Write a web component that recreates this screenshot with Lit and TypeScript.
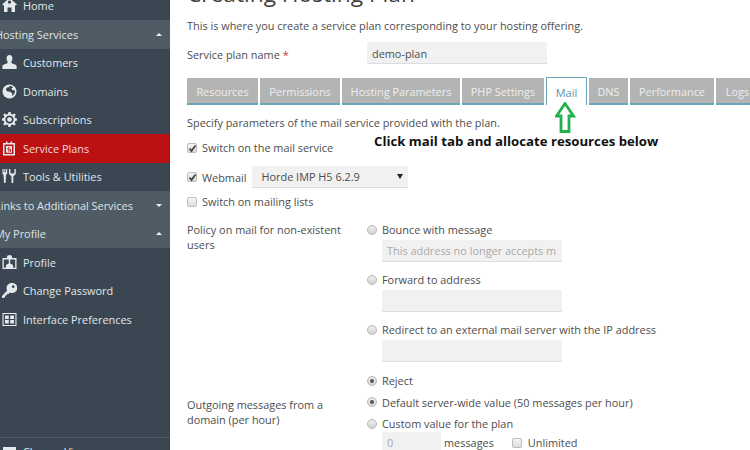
import { LitElement, html, css, svg } from "lit";
import { customElement } from "lit/decorators.js";

const icons: Record<string, unknown> = {
  home: svg`<path d="M7.5 0 L15 6.5 L13.5 7.5 L13 7 V14 H9.5 V9.5 H5.5 V14 H2 V7 L1.5 7.5 L0 6.5 Z M7.5 2.5 a1.6 1.6 0 1 0 .01 0 Z" fill-rule="evenodd"/>`,
  user: svg`<path d="M7.5 0 C9.8 0 10.6 1.8 10.4 3.8 C10.3 5.6 9.4 6.6 9.2 7.6 C9.2 8.8 14.4 9.4 14.6 11 V14 H.4 V11 C.7 9.4 5.8 8.8 5.8 7.6 C5.6 6.6 4.7 5.6 4.6 3.8 C4.4 1.8 5.2 0 7.5 0 Z"/>`,
  globe: svg`<path fill-rule="evenodd" d="M7.5 .5 a7 7 0 1 0 .01 0 Z M7.5 2 C8.6 2 10 2.4 11.2 3.4 L9.2 4.6 L10.4 6 L13 6.6 C13.2 8.6 12.2 10.8 10.2 11.9 L10.2 9.6 L8.2 7.8 L5.4 7.6 L3.8 5.8 L4.8 3.4 L6.4 3.6 Z"/>`,
  gear: svg`<path fill-rule="evenodd" d="M6.4 0 H8.6 L9 2 L10.6 2.6 L12.4 1.4 L13.8 2.8 L12.6 4.6 L13.2 6 L15 6.4 V8.6 L13.2 9 L12.6 10.4 L13.8 12.2 L12.4 13.6 L10.6 12.4 L9 13 L8.6 15 H6.4 L6 13 L4.4 12.4 L2.6 13.6 L1.2 12.2 L2.4 10.4 L1.8 9 L0 8.6 V6.4 L1.8 6 L2.4 4.6 L1.2 2.8 L2.6 1.4 L4.4 2.6 L6 2 Z M7.5 3.4 a4.1 4.1 0 1 0 .01 0 Z M7.5 5.2 a2.3 2.3 0 1 1 -.01 0 Z"/>`,
  plan: svg`<path fill-rule="evenodd" d="M1 2 H4 V.5 H5.5 V2 H8.5 V.5 H10 V2 H13 V14.5 H1 Z M2.5 3.6 V13 H11.5 V3.6 Z M4 5 H10 V11.8 H4 Z M6.4 6 V7.4 H5 V8.2 H6.4 V10.8 H7.4 V6 Z M8 8 V10.8 H9 V8 Z"/>`,
  tools: svg`<path d="M.4 0 H1.5 V3.2 H2.3 V0 H3.3 V3.2 H4.1 V0 H5.2 V4.4 L4 6 L3.6 14 H2 L1.6 6 L.4 4.4 Z M7 0 H8.4 V3.2 C8.4 4.2 9.2 4.6 10.4 4.6 C11.6 4.6 12.4 4.2 12.4 3.2 V0 H13.8 V4 C13.8 5.6 12.4 6.6 11.4 7 L11.2 14 H9.6 L9.4 7 C8.4 6.6 7 5.6 7 4 Z"/>`,
  profile: svg`<path fill-rule="evenodd" d="M.5 3 H5 V1.6 A2.5 1.6 0 0 1 10 1.6 V3 H14.5 V14 H.5 Z M1.8 4.4 V12.8 H3.8 L4 10 L6.8 8.6 V4.4 Z M8.2 4.4 V8.6 L11 10 L11.2 12.8 H13.2 V4.4 Z"/>`,
  key: svg`<path fill-rule="evenodd" d="M10 0 A5 5 0 1 1 8 9.4 L6.4 11 H4.8 V12.6 H3.2 V14 L1.6 15 H0 V13 L5.2 7.4 A5 5 0 0 1 10 0 Z M11.2 2.2 a1.4 1.4 0 1 0 .01 0 Z"/>`,
  grid: svg`<path fill-rule="evenodd" d="M.5 1 H14.5 V14 H.5 Z M1.6 2.1 V12.9 H13.4 V2.1 Z M3 3.4 H6.8 V6.9 H3 Z M8.2 3.4 H12 V6.9 H8.2 Z M3 8.1 H6.8 V11.6 H3 Z M8.2 8.1 H12 V11.6 H8.2 Z"/>`,
};

type Row =
  | { kind: "item"; label: string; icon: string; active?: boolean }
  | { kind: "group"; label: string; open: boolean };

const rows: Row[] = [
  { kind: "item", label: "Home", icon: "home" },
  { kind: "group", label: "Hosting Services", open: true },
  { kind: "item", label: "Customers", icon: "user" },
  { kind: "item", label: "Domains", icon: "globe" },
  { kind: "item", label: "Subscriptions", icon: "gear" },
  { kind: "item", label: "Service Plans", icon: "plan", active: true },
  { kind: "item", label: "Tools & Utilities", icon: "tools" },
  { kind: "group", label: "Links to Additional Services", open: false },
  { kind: "group", label: "My Profile", open: true },
  { kind: "item", label: "Profile", icon: "profile" },
  { kind: "item", label: "Change Password", icon: "key" },
  { kind: "item", label: "Interface Preferences", icon: "grid" },
];

const tabs: [string, number][] = [
  ["Resources", 71], ["Permissions", 80], ["Hosting Parameters", 118], ["PHP Settings", 82],
  ["Mail", 41], ["DNS", 39], ["Performance", 84], ["Logs", 43],
];

@customElement("app-root")
export class AppRoot extends LitElement {
  static styles = css`
    :host { display: block; width: 750px; height: 450px; overflow: hidden; background: #fff; font-family: "Open Sans", sans-serif; font-size: 10.9px; color: #4d4d4d; }
    .page { display: flex; height: 450px; overflow: hidden; position: relative; }
    .side { flex: 0 0 170px; width: 170px; height: 450px; background: #3a4651; overflow: hidden; display: flex; flex-direction: column; color: #e2e8ec; }
    .rows { margin-top: -8.5px; display: flex; flex-direction: column; flex: 1; }
    .row { height: 28.5px; flex: none; display: flex; align-items: center; gap: 6px; padding-left: 2px; }
    .row svg { width: 15px; height: 15px; fill: #e6e9eb; flex: none; }
    .row.active { background: #bc1113; color: #f3dcdc; }
    .row.group { background: #505c65; padding: 0 8px 0 0; margin-left: -5px; justify-content: space-between; color: #dfe4e7; }
    .caret { width: 0; height: 0; border-left: 3.5px solid transparent; border-right: 3.5px solid transparent; }
    .caret.up { border-bottom: 3.5px solid #f2f2f2; }
    .caret.down { border-top: 3.5px solid #f2f2f2; }
    .foot { flex: none; height: 13px; box-sizing: border-box; border-top: 1px solid #4f5a63; display: flex; align-items: flex-start; gap: 7px; padding: 9px 0 0 3px; }
    .foot i { display: block; flex: none; width: 13px; height: 12px; background: #e6e9eb; }
    .foot span { line-height: 14px; margin-top: -2px; white-space: nowrap; }
    .main { flex: 1; min-width: 0; padding-left: 17px; overflow: hidden; display: flex; flex-direction: column; align-items: flex-start; }
    h1 { margin: -21px 0 0; font-weight: 400; font-size: 22.7px; line-height: 30px; color: #3f3f3f; white-space: nowrap; }
    .desc { margin: 8px 0 0; line-height: 18px; height: 18px; white-space: nowrap; }
    .name { display: flex; align-items: center; height: 22px; margin-top: 8px; }
    .lbl { width: 180px; flex: none; padding-top: 2px; }
    .req { color: #c0392b; }
    .field { height: 22px; background: #f1f1f1; border-bottom: 1px solid #d9dde0; box-sizing: border-box; padding-left: 5px; line-height: 23px; width: 180px; }
    .tabs { display: flex; gap: 2px; margin-top: 14px; height: 27px; width: 590px; flex: none; }
    .tab { height: 27px; box-sizing: border-box; background: #b4b4b4; color: #eeeeee; border-bottom: 2px solid #6aa5be; line-height: 27px; text-align: center; flex: none; }
    .tab.on { background: #fff; color: #5f93b3; border: 1px solid #6aa5be; border-bottom: 0; height: 28px; margin-top: -1px; line-height: 29px; }
    .p { line-height: 17px; white-space: nowrap; }
    .spec { margin-top: 9px; }
    .chk { display: flex; align-items: center; gap: 5px; white-space: nowrap; }
    .box { width: 10px; height: 10px; box-sizing: border-box; flex: none; border: 1px solid #bdbdbd; border-radius: 2px; background: linear-gradient(#f6f6f6, #dcdcdc); display: flex; position: relative; }
    .box svg { width: 10px; height: 10px; position: absolute; left: -1px; top: -1px; fill: none; stroke: #444; stroke-width: 1.8; }
    .c1 { margin-top: 9px; height: 17px; }
    .c2 { margin-top: 11px; height: 22px; }
    .select { margin-left: 1px; width: 156px; height: 22px; box-sizing: border-box; background: #f1f1f1; border-bottom: 1px solid #d9dde0; padding: 0 5px 0 9px; display: flex; align-items: center; justify-content: space-between; }
    .select b { width: 0; height: 0; border-left: 3px solid transparent; border-right: 3px solid transparent; border-top: 5px solid #222; }
    .c3 { margin-top: 6px; height: 17px; }
    .form { display: grid; grid-template-columns: 180px 1fr; margin-top: 13px; }
    .form .l { line-height: 15px; width: 165px; }
    .opts { display: flex; flex-direction: column; align-items: flex-start; }
    .rad { display: flex; align-items: center; gap: 5px; height: 15px; white-space: nowrap; }
    .dot { width: 10px; height: 10px; box-sizing: border-box; border: 1px solid #b5b5b5; border-radius: 50%; background: linear-gradient(#eee, #d4d4d4); flex: none; display: flex; align-items: center; justify-content: center; }
    .dot.on::after { content: ""; width: 4px; height: 4px; border-radius: 50%; background: #555; }
    .inp { margin: 3px 0 10px 15px; width: 180px; height: 22px; box-sizing: border-box; background: #f1f1f1; border-bottom: 1px solid #dcdfe1; padding-left: 5px; line-height: 21px; color: #a9a9a9; overflow: hidden; white-space: nowrap; }
    .second { margin-top: 1px; display: grid; grid-template-columns: 180px 1fr; }
    .second .l { line-height: 15px; width: 165px; margin-top: 24px; }
    .stack { display: flex; flex-direction: column; gap: 6.5px; }
    .msg { display: flex; align-items: center; margin: -6px 0 0 15px; white-space: nowrap; }
    .num { width: 59px; height: 22px; box-sizing: border-box; background: #f1f1f1; padding-left: 5px; line-height: 21px; color: #a9a9a9; margin-right: 3px; }
    .unl { margin-left: 18px; display: flex; align-items: center; gap: 6px; }
    .note { position: absolute; left: 374px; top: 131px; font-weight: 700; font-size: 13.2px; line-height: 20px; color: #111; white-space: nowrap; }
    .arrow { position: absolute; left: 555px; top: 102px; width: 21px; height: 32px; fill: #fff; stroke: #22b14c; stroke-width: 2.8; }
  `;

  private row(r: Row) {
    if (r.kind === "group") {
      return html`<div class="row group"><span>${r.label}</span><span class="caret ${r.open ? "up" : "down"}"></span></div>`;
    }
    return html`<div class="row ${r.active ? "active" : ""}"><svg viewBox="0 0 15 15">${icons[r.icon]}</svg><span>${r.label}</span></div>`;
  }

  private check(on: boolean) {
    return html`<span class="box">${on ? html`<svg viewBox="0 0 10 10"><path d="M2.5 5.5 L4.5 8 L8.5 2.5"/></svg>` : ""}</span>`;
  }

  render() {
    return html`<div class="page">
      <nav class="side">
        <div class="rows">${rows.map((r) => this.row(r))}</div>
        <div class="foot"><i></i><span>Change View</span></div>
      </nav>
      <main class="main">
        <h1>Creating Hosting Plan</h1>
        <p class="p desc">This is where you create a service plan corresponding to your hosting offering.</p>
        <div class="name"><span class="lbl">Service plan name <span class="req">*</span></span><span class="field">demo-plan</span></div>
        <div class="tabs">${tabs.map(
          ([t, w]) => html`<div class="tab ${t === "Mail" ? "on" : ""}" style="width:${w}px">${t}</div>`
        )}</div>
        <div class="p spec">Specify parameters of the mail service provided with the plan.</div>
        <div class="chk c1">${this.check(true)}<span>Switch on the mail service</span></div>
        <div class="chk c2">${this.check(true)}<span>Webmail</span><div class="select"><span>Horde IMP H5 6.2.9</span><b></b></div></div>
        <div class="chk c3">${this.check(false)}<span>Switch on mailing lists</span></div>
        <div class="form">
          <div class="l">Policy on mail for non-existent users</div>
          <div class="opts">
            <div class="rad"><span class="dot"></span>Bounce with message</div>
            <div class="inp">This address no longer accepts m</div>
            <div class="rad"><span class="dot"></span>Forward to address</div>
            <div class="inp"></div>
            <div class="rad"><span class="dot"></span>Redirect to an external mail server with the IP address</div>
            <div class="inp"></div>
          </div>
        </div>
        <div class="second">
          <div class="l">Outgoing messages from a domain (per hour)</div>
          <div class="stack">
            <div class="rad"><span class="dot on"></span>Reject</div>
            <div class="rad"><span class="dot on"></span>Default server-wide value (50 messages per hour)</div>
            <div class="rad"><span class="dot"></span>Custom value for the plan</div>
            <div class="msg"><span class="num">0</span>messages<span class="unl"><span class="box"></span>Unlimited</span></div>
          </div>
        </div>
      </main>
      <div class="note">Click mail tab and allocate resources below</div>
      <svg class="arrow" viewBox="0 0 21 32"><path d="M10 1.5 L18.5 14 H14 V29.5 H6 V14 H1.5 Z"/></svg>
    </div>`;
  }
}
